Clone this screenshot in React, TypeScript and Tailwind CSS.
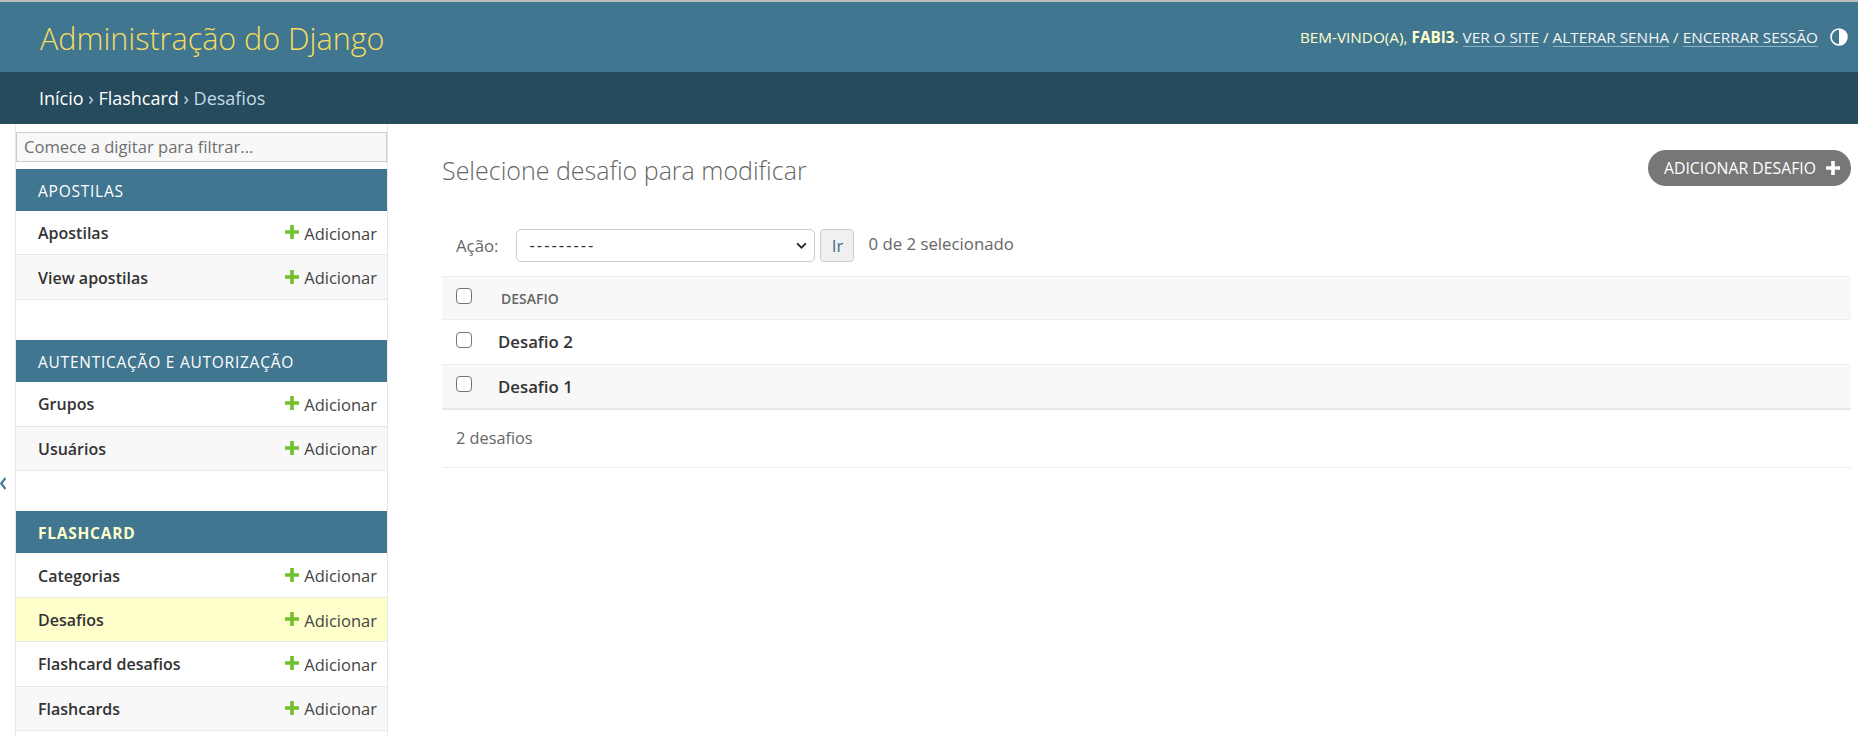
import React from "react";

const font = { fontFamily: '"Open Sans", "Noto Sans", sans-serif' };

const groups = [
  { title: "APOSTILAS", rows: ["Apostilas", "View apostilas"] },
  { title: "AUTENTICAÇÃO E AUTORIZAÇÃO", rows: ["Grupos", "Usuários"] },
  {
    title: "FLASHCARD",
    active: true,
    rows: ["Categorias", "Desafios", "Flashcard desafios", "Flashcards"],
  },
];

const Plus = ({ className }: { className: string }) => (
  <svg viewBox="0 0 14 14" className={className} fill="currentColor">
    <path d="M5.2 0h3.6v5.2H14v3.6H8.8V14H5.2V8.8H0V5.2h5.2z" />
  </svg>
);

const Checkbox = () => (
  <span className="block w-[16px] h-[16px] rounded-[4px] border border-[#767676] bg-white" />
);

const Sidebar = () => (
  <aside className="w-[373px] ml-[15px] shrink-0 border-x border-[#e8e8e8] h-[612px] overflow-hidden">
    <div className="mt-[8px] mb-[7px] h-[30px] border border-[#cccccc] bg-[#f8f8f8] flex items-center pl-[7px] text-[16.6px] text-[#6f6f6f]">
      Comece a digitar para filtrar...
    </div>
    {groups.map((g) => (
      <div key={g.title} className="mb-[40.4px]">
        <div
          className={`h-[42px] bg-[#417690] flex items-center pl-[22px] pt-[3px] text-[15.5px] tracking-[0.75px] ${
            g.active ? "font-bold text-[#ffffcc]" : "text-white"
          }`}
        >
          {g.title}
        </div>
        {g.rows.map((r, i) => (
          <div
            key={r}
            className={`h-[44.4px] border-b border-[#e8e8e8] flex items-center pl-[22px] pr-[10px] pt-[1px] text-[16px] ${
              r === "Desafios" ? "bg-[#ffffcc]" : i % 2 ? "bg-[#f8f8f8]" : "bg-white"
            }`}
          >
            <span className="font-semibold text-[#333333]">{r}</span>
            <span className="ml-auto flex items-center gap-[5px] text-[16.5px] text-[#444444]">
              <Plus className="w-[14px] h-[14px] text-[#70bf2b] -mt-[2px]" />
              <span className="mt-[2px]">Adicionar</span>
            </span>
          </div>
        ))}
      </div>
    ))}
  </aside>
);

const ChangeList = () => (
  <main className="flex-1 ml-[54px] mr-[7px]">
    <div className="flex items-start justify-between">
      <h1 className="mt-[28px] text-[25px] leading-[36px] font-light text-[#666666]">
        Selecione desafio para modificar
      </h1>
      <a className="mt-[26px] h-[36px] rounded-[18px] bg-[#777777] text-white text-[15.8px] flex items-center pl-[16px] pr-[11px] gap-[10px]">
        <span className="mt-[1px]">ADICIONAR DESAFIO</span>
        <Plus className="w-[14px] h-[14px] text-white" />
      </a>
    </div>

    <div className="mt-[41px] h-[47px] flex items-start text-[16.8px] text-[#666666]">
      <span className="ml-[14px] mt-[4px]">Ação:</span>
      <div className="ml-[18px] w-[299px] h-[33px] rounded-[5px] border border-[#cccccc] bg-white flex items-center pl-[12px] pr-[7px] text-[#333333]">
        <span className="font-['Liberation_Sans',sans-serif] text-[16px] tracking-[2px]">---------</span>
        <svg viewBox="0 0 12 8" className="ml-auto w-[11px] h-[7px]" fill="none" stroke="#222222" strokeWidth="2">
          <path d="M1 1.5l5 5 5-5" />
        </svg>
      </div>
      <div className="ml-[5px] w-[34px] h-[33px] rounded-[4px] border border-[#cccccc] bg-[#f0f0f0] flex items-center justify-center text-[#3f6f87]">
        Ir
      </div>
      <span className="ml-[14px] mt-[2px]">0 de 2 selecionado</span>
    </div>

    <div className="h-[44px] border-y border-[#eeeeee] bg-[#f8f8f8] flex items-center pl-[14px]">
      <div className="-mt-[5px]"><Checkbox /></div>
      <span className="ml-[29px] text-[14px] font-semibold text-[#666666]">DESAFIO</span>
    </div>
    <div className="h-[45px] border-b border-[#eeeeee] bg-white flex items-center pl-[14px]">
      <div className="-mt-[5px]"><Checkbox /></div>
      <span className="ml-[26px] text-[16.8px] font-semibold text-[#333333]">Desafio 2</span>
    </div>
    <div className="h-[45px] border-b-2 border-[#e8e8e8] bg-[#f8f8f8] flex items-center pl-[14px]">
      <div className="-mt-[5px]"><Checkbox /></div>
      <span className="ml-[26px] text-[16.8px] font-semibold text-[#333333]">Desafio 1</span>
    </div>
    <div className="h-[58px] border-b border-[#eeeeee] flex items-center pl-[14px] text-[16.3px] text-[#666666]">
      2 desafios
    </div>
  </main>
);

export default function App() {
  return (
    <div style={font} className="h-[736px] overflow-hidden bg-white relative">
      <div className="h-[2px] bg-[#bdbdbd]" />
      <header className="h-[70px] bg-[#417690] flex items-center pl-[40px] pr-[10px]">
        <span className="mt-[3px] text-[30.5px] font-light text-[#f5dd5d]">Administração do Django</span>
        <div className="ml-auto flex items-center text-[15.3px] text-[#ffffcc]">
          <span>BEM-VINDO(A), <b className="font-bold">FABI3</b>.&nbsp;</span>
          <a className="border-b border-[#8fb0c2] leading-[18px] text-[#f5f5f5]">VER O SITE</a>
          <span>&nbsp;/&nbsp;</span>
          <a className="border-b border-[#8fb0c2] leading-[18px] text-[#f5f5f5]">ALTERAR SENHA</a>
          <span>&nbsp;/&nbsp;</span>
          <a className="border-b border-[#8fb0c2] leading-[18px] text-[#f5f5f5]">ENCERRAR SESSÃO</a>
          <svg viewBox="0 0 18 18" className="ml-[12px] w-[18px] h-[18px]">
            <circle cx="9" cy="9" r="8" fill="none" stroke="#fff" strokeWidth="1.6" />
            <path d="M9 1a8 8 0 0 1 0 16z" fill="#fff" />
          </svg>
        </div>
      </header>
      <nav className="h-[52px] bg-[#264b5d] flex items-center pl-[39px] text-[18px] text-[#c4dce8]">
        <a className="text-white">Início</a>
        <span>&nbsp;›&nbsp;</span>
        <a className="text-white">Flashcard</a>
        <span>&nbsp;›&nbsp;</span>
        <span>Desafios</span>
      </nav>
      <div className="flex">
        <Sidebar />
        <ChangeList />
      </div>
      {/* toggle da barra lateral */}
      <svg viewBox="0 0 6 13" className="absolute left-0 top-[477px] w-[6px] h-[13px]" fill="none" stroke="#447e9b" strokeWidth="2.2">
        <path d="M5.5 1L1.2 6.5l4.3 5.5" />
      </svg>
    </div>
  );
}
